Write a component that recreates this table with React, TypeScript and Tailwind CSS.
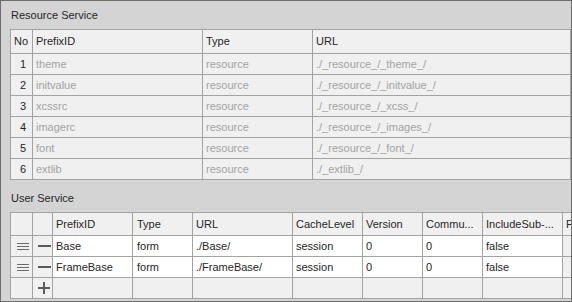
import React from 'react'

const resourceRows = [
  { no: 1, prefix: 'theme', type: 'resource', url: './_resource_/_theme_/' },
  { no: 2, prefix: 'initvalue', type: 'resource', url: './_resource_/_initvalue_/' },
  { no: 3, prefix: 'xcssrc', type: 'resource', url: './_resource_/_xcss_/' },
  { no: 4, prefix: 'imagerc', type: 'resource', url: './_resource_/_images_/' },
  { no: 5, prefix: 'font', type: 'resource', url: './_resource_/_font_/' },
  { no: 6, prefix: 'extlib', type: 'resource', url: './_extlib_/' },
]

const userRows = [
  { prefix: 'Base', type: 'form', url: './Base/', cache: 'session', version: '0', comm: '0', include: 'false' },
  { prefix: 'FrameBase', type: 'form', url: './FrameBase/', cache: 'session', version: '0', comm: '0', include: 'false' },
]

const userCols = 'grid-cols-[22px_20px_80px_60px_100px_70px_60px_60px_80px_60px]'

function Hamburger() {
  return (
    <svg width="12" height="7" viewBox="0 0 12 7">
      <rect x="0" y="0" width="12" height="1" fill="#6b6b6b" />
      <rect x="0" y="3" width="12" height="1" fill="#6b6b6b" />
      <rect x="0" y="6" width="12" height="1" fill="#6b6b6b" />
    </svg>
  )
}

function Minus() {
  return (
    <svg width="13" height="2" viewBox="0 0 13 2">
      <rect x="0" y="0" width="13" height="2" fill="#5a5a5a" />
    </svg>
  )
}

function Plus() {
  return (
    <svg width="12" height="12" viewBox="0 0 12 12">
      <rect x="0" y="5" width="12" height="2" fill="#5a5a5a" />
      <rect x="5" y="0" width="2" height="12" fill="#5a5a5a" />
    </svg>
  )
}

export default function App() {
  const cell = 'border-r border-b border-[#a3a3a3] flex items-center pl-[3px] whitespace-nowrap overflow-hidden'

  return (
    <div className="w-[572px] h-[302px] border border-[#6e6e6e] bg-[#d4d4d4] overflow-hidden font-['Liberation_Sans',Arial,sans-serif] text-[11px] leading-[13px] text-[#262626]">
      {/* Resource Service */}
      <div className="h-[28px] pl-[10px] pt-[8px]">Resource Service</div>
      <div className="ml-[9px] border-l border-t border-[#a3a3a3] grid grid-cols-[22px_170px_110px_258px] bg-[#f0f0f0]">
        <div className={`${cell} h-[24px]`}>No</div>
        <div className={`${cell} h-[24px]`}>PrefixID</div>
        <div className={`${cell} h-[24px]`}>Type</div>
        <div className={`${cell} h-[24px]`}>URL</div>
        {resourceRows.map((r) => (
          <React.Fragment key={r.no}>
            <div className={`${cell} h-[21px] justify-center pl-0`}>{r.no}</div>
            <div className={`${cell} h-[21px] text-[#a3a3a3]`}>{r.prefix}</div>
            <div className={`${cell} h-[21px] text-[#a3a3a3]`}>{r.type}</div>
            <div className={`${cell} h-[21px] text-[#a3a3a3]`}>{r.url}</div>
          </React.Fragment>
        ))}
      </div>

      {/* User Service */}
      <div className="h-[32px] pl-[10px] pt-[12px]">User Service</div>
      <div className={`ml-[9px] w-[700px] border-l border-t border-[#a3a3a3] grid ${userCols} bg-[#f0f0f0]`}>
        <div className={`${cell} h-[23px]`}></div>
        <div className={`${cell} h-[23px]`}></div>
        <div className={`${cell} h-[23px]`}>PrefixID</div>
        <div className={`${cell} h-[23px] pl-[4px]`}>Type</div>
        <div className={`${cell} h-[23px]`}>URL</div>
        <div className={`${cell} h-[23px] pl-[2px]`}>CacheLevel</div>
        <div className={`${cell} h-[23px]`}>Version</div>
        <div className={`${cell} h-[23px]`}>Commu...</div>
        <div className={`${cell} h-[23px] pl-[2px]`}>IncludeSub-...</div>
        <div className={`${cell} h-[23px]`}>F</div>
        {userRows.map((r) => (
          <React.Fragment key={r.prefix}>
            <div className={`${cell} h-[21px] justify-center pl-0`}><Hamburger /></div>
            <div className={`${cell} h-[21px] justify-center pl-0`}><Minus /></div>
            <div className={`${cell} h-[21px] bg-white`}>{r.prefix}</div>
            <div className={`${cell} h-[21px] bg-white pl-[4px]`}>{r.type}</div>
            <div className={`${cell} h-[21px] bg-white`}>{r.url}</div>
            <div className={`${cell} h-[21px] bg-white`}>{r.cache}</div>
            <div className={`${cell} h-[21px] bg-white`}>{r.version}</div>
            <div className={`${cell} h-[21px] bg-white`}>{r.comm}</div>
            <div className={`${cell} h-[21px] bg-white`}>{r.include}</div>
            <div className={`${cell} h-[21px]`}></div>
          </React.Fragment>
        ))}
        <div className={`${cell} h-[21px]`}></div>
        <div className={`${cell} h-[21px] justify-center pl-0`}><Plus /></div>
        <div className={`${cell} h-[21px]`}></div>
        <div className={`${cell} h-[21px]`}></div>
        <div className={`${cell} h-[21px]`}></div>
        <div className={`${cell} h-[21px]`}></div>
        <div className={`${cell} h-[21px]`}></div>
        <div className={`${cell} h-[21px]`}></div>
        <div className={`${cell} h-[21px]`}></div>
        <div className={`${cell} h-[21px]`}></div>
      </div>
    </div>
  )
}
